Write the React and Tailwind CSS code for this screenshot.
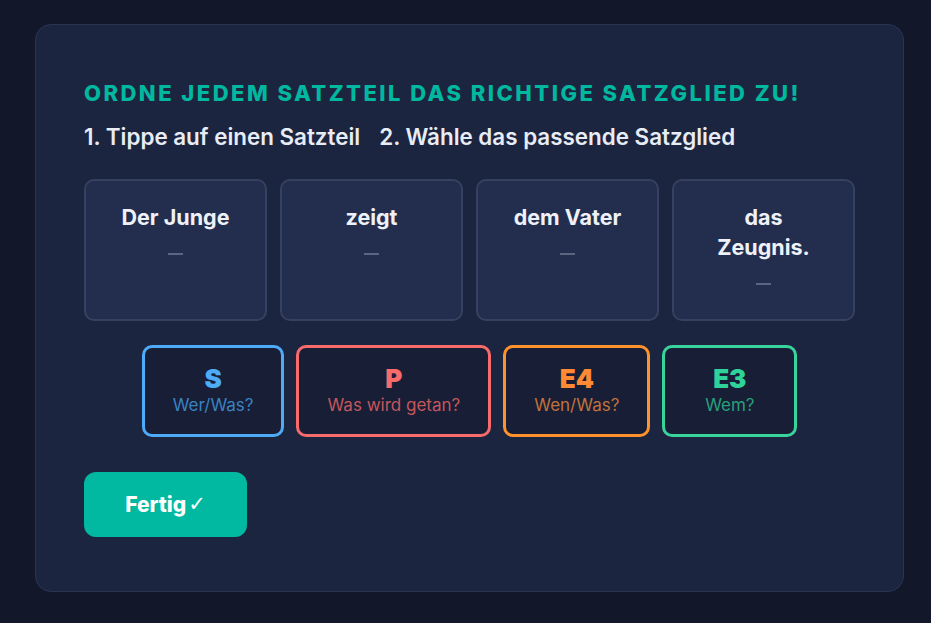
export default function App() {
  const words = [
    { t: "Der Junge" },
    { t: "zeigt" },
    { t: "dem Vater" },
    { t: "das Zeugnis." },
  ];
  const chips = [
    { l: "S", s: "Wer/Was?", b: "border-[#4dabf7]", c: "text-[#4dabf7]", sc: "text-[#3b82c4]" },
    { l: "P", s: "Was wird getan?", b: "border-[#f76b6b]", c: "text-[#f76b6b]", sc: "text-[#c4575c]" },
    { l: "E4", s: "Wen/Was?", b: "border-[#ff922b]", c: "text-[#ff8a33]", sc: "text-[#c0733a]" },
    { l: "E3", s: "Wem?", b: "border-[#38d49c]", c: "text-[#2fd39a]", sc: "text-[#27a07a]" },
  ];
  return (
    <div className="min-h-screen bg-[#121829] p-[24px_27px_30px_35px]" style={{ fontFamily: "Inter, 'Noto Sans', sans-serif" }}>
      <div className="w-[869px] rounded-2xl border border-[#2a3452] bg-[#1c2540] px-12 pt-[54px] pb-[54px]">
        <h1 className="text-[22px] leading-7 font-extrabold uppercase tracking-[0.112em] text-[#00b89f]">
          Ordne jedem Satzteil das richtige Satzglied zu!
        </h1>
        <p className="mt-4 flex text-[22.4px] leading-7 font-semibold text-[#e8ecf5] whitespace-pre">
          <span>1. Tippe auf einen Satzteil</span>
          <span className="ml-[19px]">2. Wähle das passende Satzglied</span>
        </p>
        <div className="mt-[28px] grid grid-cols-4 gap-[13px]">
          {words.map((w) => (
            <div key={w.t} className="h-[142px] rounded-[10px] border-2 border-[#36415f] bg-[#232e4f] px-6 pt-[21px] text-center">
              <div className="text-[21.5px] leading-[30px] font-bold text-[#eef1f8]">{w.t}</div>
              <div className="mt-[10px] flex h-6 items-center justify-center">
                <div className="h-[2px] w-[15px] bg-[#5a6582]" />
              </div>
            </div>
          ))}
        </div>
        <div className="mt-[24px] flex justify-center gap-3">
          {chips.map((c) => (
            <div key={c.l} className={`min-w-[135px] rounded-[10px] border-[3px] ${c.b} bg-[#171e36] px-7 pt-4 pb-[18px] text-center`}>
              <div className={`text-[26px] leading-[30px] font-black ${c.c}`}>{c.l}</div>
              <div className={`text-[17px] leading-[22px] ${c.sc}`}>{c.s}</div>
            </div>
          ))}
        </div>
        <button className="mt-[35px] flex h-[65px] w-[163px] items-center justify-center rounded-xl bg-[#00b9a0] text-[21px] font-extrabold text-white">
          Fertig<span style={{ fontFamily: "'DejaVu Sans', sans-serif" }} className="ml-0.5 font-normal">✓</span>
        </button>
      </div>
    </div>
  );
}
